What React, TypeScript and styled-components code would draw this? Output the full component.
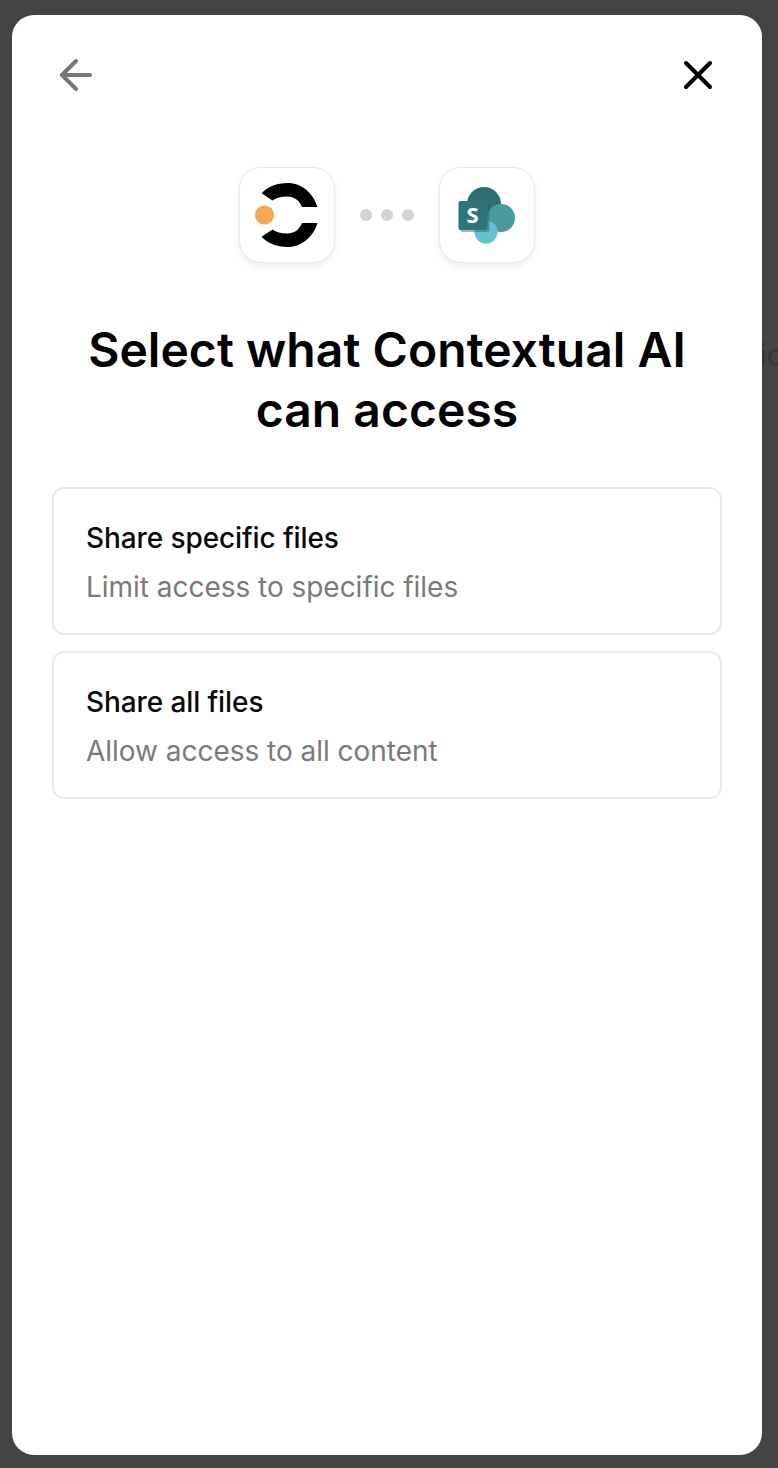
import React from 'react';
import styled, { createGlobalStyle } from 'styled-components';
import { ArrowLeft, X } from 'lucide-react';

const GlobalStyle = createGlobalStyle`
	html, body {
		margin: 0;
		padding: 0;
		background: #444444;
	}

	* {
		box-sizing: border-box;
	}
`;

// Styles
const Page = styled.div`
	position: relative;
	width: 778px;
	height: 1468px;
	padding: 15px 16px 13px 12px;
	overflow: hidden;
	font-family: 'Inter', 'Liberation Sans', sans-serif;
	background: #444444;
`;

const BehindText = styled.span`
	position: absolute;
	right: -6px;
	top: 335px;
	font-size: 30px;
	line-height: 40px;
	color: #363636;
`;

const Modal = styled.main`
	position: relative;
	display: flex;
	flex-direction: column;
	height: 1440px;
	padding: 36px 40px 0;
	background: #ffffff;
	border-radius: 22px;
`;

const Header = styled.header`
	display: flex;
	align-items: center;
	justify-content: space-between;
	height: 48px;
	margin-bottom: 68px;
`;

const IconButton = styled.button<{ $color: string }>`
	display: flex;
	align-items: center;
	justify-content: center;
	width: 48px;
	height: 48px;
	padding: 0;
	border: none;
	background: none;
	color: ${(p) => p.$color};

	svg {
		flex: none;
	}
`;

const Logos = styled.div`
	display: flex;
	align-items: center;
	justify-content: center;
	gap: 25px;
	margin-bottom: 57px;
`;

const LogoTile = styled.div`
	display: flex;
	align-items: center;
	justify-content: center;
	width: 96px;
	height: 96px;
	background: #ffffff;
	border: 1px solid #e9e9e9;
	border-radius: 22px;
	box-shadow: 0 3px 7px rgba(0, 0, 0, 0.08);

	svg {
		flex: none;
	}
`;

const Dots = styled.div`
	display: flex;
	gap: 9px;
`;

const Dot = styled.span`
	width: 12px;
	height: 12px;
	border-radius: 50%;
	background: #d4d3d2;
`;

const Title = styled.h1`
	margin: 0 0 47px;
	font-size: 48px;
	font-weight: 600;
	letter-spacing: 0.05px;
	line-height: 60px;
	text-align: center;
	color: #000000;
`;

const Options = styled.div`
	display: flex;
	flex-direction: column;
	gap: 16px;
`;

const Option = styled.div`
	display: flex;
	flex-direction: column;
	gap: 22px;
	height: 148px;
	padding: 34px 32px 0;
	border: 2px solid #e9e9e9;
	border-radius: 12px;
`;

const OptionTitle = styled.div`
	font-size: 28px;
	font-weight: 500;
	letter-spacing: -0.1px;
	line-height: 30px;
	color: #0a0a0a;
`;

const OptionText = styled.div`
	font-size: 28px;
	line-height: 24px;
	letter-spacing: -0.03px;
	color: #7a7a7a;
`;

function ContextualLogo() {
	return (
		<svg width="96" height="96" viewBox="0 0 96 96">
			<path d="M22.7 26.3 C28 20 38 16 48.5 16 C63 16 74 26 78.5 40 L63 40 C60 33 55 29.5 48 29.5 C42 29.5 37 31 33.5 33.5 Z" fill="#000" />
			<path d="M22.7 69.7 C28 76 38 80 48.5 80 C63 80 74 70 78.5 56 L63 56 C60 63 55 66.5 48 66.5 C42 66.5 37 65 33.5 62.5 Z" fill="#000" />
			<circle cx="25.5" cy="48" r="9.6" fill="#f4a950" />
		</svg>
	);
}

function SharePointLogo() {
	return (
		<svg width="96" height="96" viewBox="0 0 96 96">
			<circle cx="45" cy="37" r="17" fill="#2f6f73" />
			<circle cx="62" cy="51" r="14" fill="#4a9a9e" />
			<circle cx="47" cy="65" r="11.5" fill="#62c3d0" />
			<rect x="21.5" y="36" width="29" height="29" rx="2" fill="#285f63" opacity="0.45" />
			<rect x="19.5" y="34" width="29" height="29" rx="2" fill="#2f7478" />
			<text x="33.5" y="56" textAnchor="middle" fontFamily="'Open Sans', sans-serif" fontSize="22" fontWeight="700" fill="#ffffff">
				S
			</text>
		</svg>
	);
}

export default function App() {
	return (
		<Page>
			<GlobalStyle />
			<BehindText>ic</BehindText>
			<Modal>
				<Header>
					<IconButton $color="#777777">
						<ArrowLeft size={48} strokeWidth={2} />
					</IconButton>
					<IconButton $color="#000000">
						<X size={48} strokeWidth={2} />
					</IconButton>
				</Header>
				<Logos>
					<LogoTile>
						<ContextualLogo />
					</LogoTile>
					<Dots>
						<Dot />
						<Dot />
						<Dot />
					</Dots>
					<LogoTile>
						<SharePointLogo />
					</LogoTile>
				</Logos>
				<Title>
					Select what Contextual AI
					<br />
					can access
				</Title>
				<Options>
					<Option>
						<OptionTitle>Share specific files</OptionTitle>
						<OptionText>Limit access to specific files</OptionText>
					</Option>
					<Option>
						<OptionTitle>Share all files</OptionTitle>
						<OptionText>Allow access to all content</OptionText>
					</Option>
				</Options>
			</Modal>
		</Page>
	);
}
